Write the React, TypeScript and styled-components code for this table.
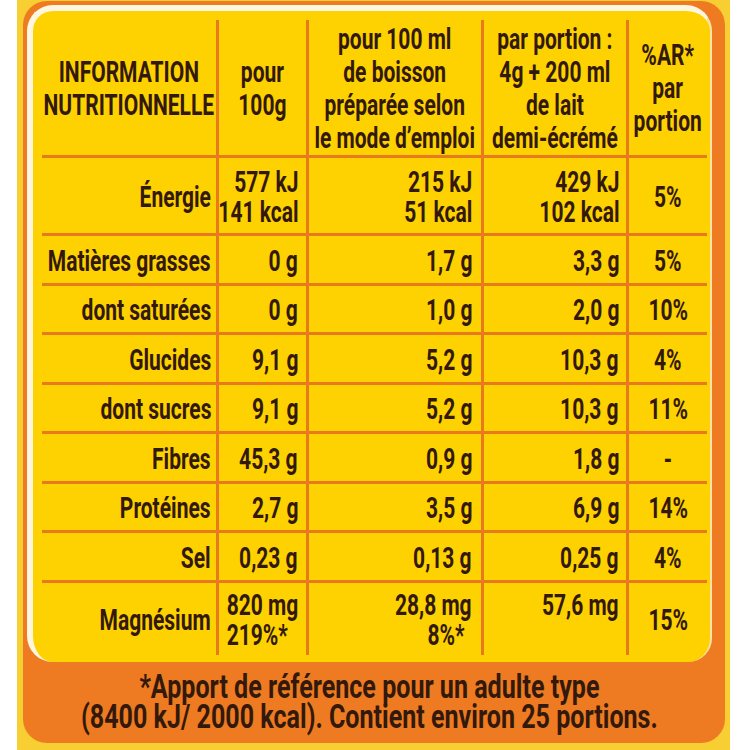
import React from "react";
import styled, { createGlobalStyle } from "styled-components";

const GlobalStyle = createGlobalStyle`
  html, body { margin: 0; padding: 0; background: #ffffff; }
  #root { width: 750px; height: 750px; overflow: hidden; }
`;

const FONT = `Roboto, "Liberation Sans", sans-serif`;
const LINE = "#E9791D";
const INK = "#33190B";
const SQUEEZE = 0.7;

const Page = styled.div`
  width: 750px;
  height: 750px;
  display: flex;
  padding: 0 20px 0 17px;
  box-sizing: border-box;
  background: #ffffff;
`;

const Strip = styled.div`
  flex: 1;
  min-width: 0;
  height: 750px;
  background: #f8cf33;
  padding: 1px 5px 7px 6px;
  box-sizing: border-box;
  display: flex;
`;

const Frame = styled.div`
  flex: 1;
  min-width: 0;
  background: #ee7b22;
  border-radius: 24px;
  padding: 4px 13px 0 4px;
  display: flex;
  flex-direction: column;
`;

const Panel = styled.div`
  height: 657px;
  min-width: 0;
  box-sizing: border-box;
  background: #fed200;
  border-top: 6px solid #fff6e0;
  border-left: 6px solid #fff6e0;
  border-right: 2px solid #fbe3a8;
  border-radius: 26px 26px 24px 26px;
  padding: 9px 3px 7px 9px;
`;

const Table = styled.div`
  display: grid;
  grid-template-columns: 177px 90px 175px 145px 78px;
  grid-template-rows: 138px 78px 50px 49px 50px 49px 50px 49px 50px 72px;
  font-family: ${FONT};
  font-weight: 700;
  color: ${INK};
`;

type Align = "right" | "center";

const Cell = styled.div<{ $align: Align; $lastCol?: boolean; $lastRow?: boolean; $pad?: number; $head?: boolean }>`
  display: flex;
  align-items: center;
  justify-content: ${(p) => (p.$align === "right" ? "flex-end" : "center")};
  border-right: ${(p) => (p.$lastCol ? "none" : `3px solid ${LINE}`)};
  border-bottom: ${(p) => (p.$lastRow ? "none" : `3px solid ${LINE}`)};
  padding-right: ${(p) => p.$pad ?? 0}px;
  padding-top: ${(p) => (p.$head ? 0 : 2)}px;
  font-size: 30px;
  line-height: ${(p) => (p.$head ? "33px" : "30px")};
  min-width: 0;
`;

const Txt = styled.span<{ $origin: "right" | "center"; $textAlign: "left" | "right" | "center" }>`
  display: inline-block;
  white-space: pre;
  text-align: ${(p) => p.$textAlign};
  transform: scaleX(${SQUEEZE});
  transform-origin: ${(p) => p.$origin} center;
`;

const Indent = styled.span<{ $right: number }>`
  display: inline-block;
  margin-right: ${(p) => p.$right}px;
`;

const Footer = styled.div`
  flex: 1;
  min-width: 0;
  display: flex;
  align-items: center;
  justify-content: center;
  padding-bottom: 2px;
  font-family: ${FONT};
  font-weight: 700;
  font-size: 33px;
  line-height: 30px;
  color: ${INK};
`;

const FootTxt = styled.span`
  display: inline-block;
  white-space: pre;
  text-align: center;
  transform: scaleX(0.76);
  transform-origin: center;
`;

const PADS = [5, 8, 9, 7, 0];

const header = [
  "INFORMATION\nNUTRITIONNELLE",
  "pour\n100g",
  "pour 100 ml\nde boisson\npréparée selon\nle mode d’emploi",
  "par portion :\n4g + 200 ml\nde lait\ndemi-écrémé",
  "%AR*\npar\nportion",
];

type Row = [string, string, string, string, string];

const rows: Row[] = [
  ["Énergie", "577 kJ\n141 kcal", "215 kJ\n51 kcal", "429 kJ\n102 kcal", "5%"],
  ["Matières grasses", "0 g", "1,7 g", "3,3 g", "5%"],
  ["dont saturées", "0 g", "1,0 g", "2,0 g", "10%"],
  ["Glucides", "9,1 g", "5,2 g", "10,3 g", "4%"],
  ["dont sucres", "9,1 g", "5,2 g", "10,3 g", "11%"],
  ["Fibres", "45,3 g", "0,9 g", "1,8 g", "-"],
  ["Protéines", "2,7 g", "3,5 g", "6,9 g", "14%"],
  ["Sel", "0,23 g", "0,13 g", "0,25 g", "4%"],
];

export default function App() {
  return (
    <>
      <GlobalStyle />
      <Page>
        <Strip>
          <Frame>
            <Panel>
              <Table>
                {header.map((h, i) => (
                  <Cell key={`h${i}`} $align="center" $head $lastCol={i === 4}>
                    <Txt $origin="center" $textAlign="center">{h}</Txt>
                  </Cell>
                ))}
                {rows.map((r, ri) =>
                  r.map((v, ci) => (
                    <Cell
                      key={`${ri}-${ci}`}
                      $align={ci === 4 ? "center" : "right"}
                      $lastCol={ci === 4}
                      $pad={PADS[ci]}
                    >
                      <Txt $origin={ci === 4 ? "center" : "right"} $textAlign={ci === 4 ? "center" : "right"}>
                        {v}
                      </Txt>
                    </Cell>
                  ))
                )}
                <Cell $align="right" $lastRow $pad={PADS[0]}>
                  <Txt $origin="right" $textAlign="right">Magnésium</Txt>
                </Cell>
                <Cell $align="right" $lastRow $pad={PADS[1]}>
                  <Txt $origin="right" $textAlign="left">{"820 mg\n219%*"}</Txt>
                </Cell>
                <Cell $align="right" $lastRow $pad={PADS[2]}>
                  <Txt $origin="right" $textAlign="right">
                    {"28,8 mg"}
                    <br />
                    <Indent $right={10}>8%*</Indent>
                  </Txt>
                </Cell>
                <Cell $align="right" $lastRow $pad={PADS[3]}>
                  <Txt $origin="right" $textAlign="right">{"57,6 mg\n "}</Txt>
                </Cell>
                <Cell $align="center" $lastRow $lastCol>
                  <Txt $origin="center" $textAlign="center">15%</Txt>
                </Cell>
              </Table>
            </Panel>
            <Footer>
              <FootTxt>{"*Apport de référence pour un adulte type\n(8400 kJ/ 2000 kcal). Contient environ 25 portions."}</FootTxt>
            </Footer>
          </Frame>
        </Strip>
      </Page>
    </>
  );
}
